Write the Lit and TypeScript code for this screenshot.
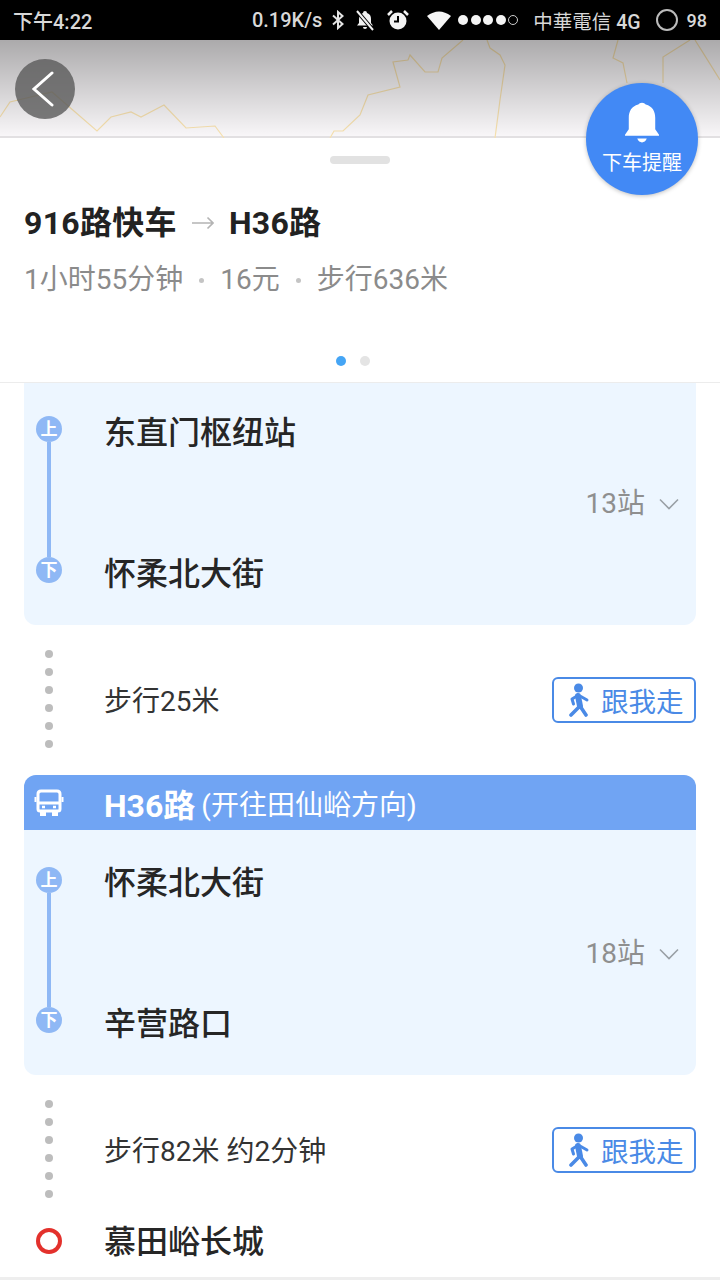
import { LitElement, html, css, svg } from 'lit';
import { customElement } from 'lit/decorators.js';

type Leg = {
  line?: string;
  direction?: string;
  from: string;
  to: string;
  stops: string;
  walk: string;
};

const legs: Leg[] = [
  { from: '东直门枢纽站', to: '怀柔北大街', stops: '13站', walk: '步行25米' },
  {
    line: 'H36路',
    direction: '(开往田仙峪方向)',
    from: '怀柔北大街',
    to: '辛营路口',
    stops: '18站',
    walk: '步行82米 约2分钟',
  },
];

const mapLines = [
  '0,117 10,102 52,92 97,131 111,117 131,112 141,117 164,105 186,128 215,126 224,138',
  '330,138 334,131 343,131 360,115 368,95 400,87 393,62 408,60 410,55 425,72 438,72 442,58 463,40',
  '487,40 490,48 500,55 505,65 500,100 495,138',
  '618,40 613,58 623,63 627,83',
  '663,83 663,57 690,40',
  '695,40 720,80',
];

@customElement('app-root')
export class AppRoot extends LitElement {
  renderStatus() {
    return html`
      <div class="status">
        <span class="time">下午4:22</span>
        <span class="status-right">
          <span>0.19K/s</span>
          <svg class="bt" width="14" height="20" viewBox="0 0 14 20" fill="none" stroke="#e4e4e4" stroke-width="2">
            <path d="M2 5.500 11.500 14 7 18V2l4.500 4L2 14.500" />
          </svg>
          <svg class="mute" width="22" height="22" viewBox="0 0 22 22" fill="#f2f2f2">
            <path d="M11 2a2 2 0 0 1 2 2c3 1 4 3 4 6v4l2 2.500H3L5 14v-4c0-3 1-5 4-6a2 2 0 0 1 2-2Z" />
            <path d="M9 18h4a2 2 0 0 1-4 0Z" />
            <path d="M3 2 19 21" stroke="#000" stroke-width="4" />
            <path d="M3 2 19 21" stroke="#f2f2f2" stroke-width="2" />
          </svg>
          <svg width="24" height="24" viewBox="0 0 24 24" fill="none">
            <circle cx="12" cy="13" r="8.500" fill="#f2f2f2" />
            <path d="M12 8v5.500H8" stroke="#000" stroke-width="2" />
            <path d="M2 7l4-4M22 7l-4-4" stroke="#f2f2f2" stroke-width="2.500" />
          </svg>
          <span class="signal">
            <svg width="26" height="20" viewBox="0 0 26 20" fill="#f6f6f6">
              <path d="M1 6Q13-3 25 6L13 20Z" />
            </svg>
            ${[1, 2, 3, 4].map(() => html`<i class="bar"></i>`)}
            <i class="bar empty"></i>
          </span>
          <span class="carrier">中華電信 <b>4G</b></span>
          <i class="battery"></i>
          <span class="level">98</span>
        </span>
      </div>
    `;
  }

  renderMap() {
    return html`
      <div class="map">
        <svg class="map-lines" width="720" height="98" viewBox="0 40 720 98" fill="none">
          ${mapLines.map(
            points => svg`<polyline points=${points} stroke="#f6e0ae" stroke-width="1.200" />`,
          )}
        </svg>
        <div class="map-shade"></div>
        <button class="back" aria-label="返回">
          <svg width="26" height="36" viewBox="0 0 26 36" fill="none" stroke="#fff" stroke-width="3" stroke-linecap="round">
            <path d="M20 2 2 18l18 16" />
          </svg>
        </button>
      </div>
    `;
  }

  renderSummary() {
    return html`
      <div class="summary">
        <div class="handle"></div>
        <div class="route">
          <span>916路快车</span>
          <svg width="22" height="14" viewBox="0 0 22 14" fill="none" stroke="#b4b4b4" stroke-width="1.600">
            <path d="M0 7h21M15.500 1.500 21 7l-5.500 5.500" />
          </svg>
          <span>H36路</span>
        </div>
        <div class="meta">
          <span>1小时55分钟</span><i></i><span>16元</span><i></i><span>步行636米</span>
        </div>
        <div class="pager"><i class="on"></i><i></i></div>
      </div>
      <button class="remind">
        <svg width="34" height="43" viewBox="0 0 36 44" fill="#fff">
          <path d="M18 0c2 0 3 1 4 2 7 2 10 7 10 14v12l4 6v1H0v-1l4-6V16C4 9 7 4 14 2c1-1 2-2 4-2Z" />
          <path d="M13 38h10c-1 3-3 4-5 4s-4-1-5-4Z" />
        </svg>
        <span>下车提醒</span>
      </button>
    `;
  }

  renderLeg(leg: Leg, index: number) {
    return html`
      <section class="card ${index === 0 ? 'first' : ''}">
        ${leg.line
          ? html`
              <header class="card-head">
                <span class="head-icon">
                  <svg width="30" height="30" viewBox="0 0 30 30" fill="none" stroke="#fff" stroke-width="3">
                    <path d="M4 21V6q0-3 3-3h16q3 0 3 3v15q0 2-2 2H6q-2 0-2-2Z" />
                    <path d="M4 15h22" />
                    <path d="M7 23v4h4v-4M19 23v4h4v-4" fill="#fff" stroke-width="2" />
                    <path d="M1.500 9v5M28.500 9v5" stroke-width="2" />
                    <path d="M8 19h3M19 19h3" stroke-width="2.500" />
                  </svg>
                </span>
                <b>${leg.line}</b>
                <span class="direction">${leg.direction}</span>
              </header>
            `
          : ''}
        <div class="card-body">
          <div class="rail">
            <i class="stop">上</i>
            <i class="rail-line"></i>
            <i class="stop">下</i>
          </div>
          <div class="stations">
            <div class="station">${leg.from}</div>
            <div class="stops">
              <span>${leg.stops}</span>
              <svg width="20" height="12" viewBox="0 0 20 12" fill="none" stroke="#9aa0a6" stroke-width="1.600">
                <path d="M1 1.500 10 10.500 19 1.500" />
              </svg>
            </div>
            <div class="station">${leg.to}</div>
          </div>
        </div>
      </section>
      ${this.renderWalk(leg.walk)}
    `;
  }

  renderWalk(label: string) {
    return html`
      <div class="walk">
        <div class="dots">${[0, 1, 2, 3, 4, 5].map(() => html`<i></i>`)}</div>
        <span class="walk-label">${label}</span>
        <button class="follow">
          <svg width="22" height="34" viewBox="0 0 22 34" fill="none" stroke="#4a8ae6" stroke-width="3.600" stroke-linecap="round" stroke-linejoin="round">
            <circle cx="10.500" cy="5" r="4.500" fill="#4a8ae6" stroke="none" />
            <path d="M10 13 12 23" stroke-width="6" />
            <path d="M9 13 4 16l1.500 5M12 13l7 4" stroke-width="3" />
            <path d="M12 23 3 32M12 23l6 9" />
          </svg>
          <span>跟我走</span>
        </button>
      </div>
    `;
  }

  render() {
    return html`
      ${this.renderStatus()} ${this.renderMap()} ${this.renderSummary()}
      <div class="legs">
        ${legs.map((leg, i) => this.renderLeg(leg, i))}
        <div class="dest">
          <i class="ring"></i>
          <span>慕田峪长城</span>
        </div>
      </div>
    `;
  }

  static styles = css`
    :host {
      display: block;
      position: relative;
      width: 720px;
      height: 1280px;
      overflow: hidden;
      background: #fff;
      font-family: Roboto, 'Noto Sans CJK SC', sans-serif;
      color: #262626;
    }
    i {
      display: block;
      font-style: normal;
    }
    button {
      font: inherit;
      padding: 0;
      border: 0;
    }
    .status {
      height: 40px;
      background: #000;
      color: #d8d8d8;
      display: flex;
      align-items: center;
      justify-content: space-between;
      padding: 0 13px 0 13px;
      font-size: 20px;
      font-weight: 500;
    }
    .status-right {
      display: flex;
      align-items: center;
      gap: 7px;
    }
    .bt {
      margin-left: 2px;
    }
    .mute {
      margin: 0 3px 0 2px;
    }
    .signal {
      display: flex;
      align-items: center;
      gap: 2.500px;
      margin: 0 8px 0 9px;
    }
    .signal svg {
      margin-right: 3.500px;
    }
    .bar {
      width: 10px;
      height: 10px;
      border-radius: 50%;
      background: #f4f4f4;
    }
    .bar.empty {
      background: none;
      border: 1px solid #ccc;
      box-sizing: border-box;
    }
    .carrier {
      font-weight: 400;
      font-size: 19.500px;
    }
    .carrier b {
      font-weight: 500;
    }
    .battery {
      width: 22px;
      height: 22px;
      box-sizing: border-box;
      border: 2px solid #bbb;
      border-radius: 50%;
      margin: 0 2px 0 8px;
    }
    .level {
      font-size: 18px;
    }
    .map {
      position: relative;
      height: 98px;
      box-sizing: border-box;
      border-bottom: 2px solid #e2e0e2;
      background: #f8f6f8;
    }
    .map-lines,
    .map-shade {
      position: absolute;
      left: 0;
      top: 0;
    }
    .map-shade {
      width: 100%;
      height: 100%;
      background: linear-gradient(rgba(0, 0, 0, 0.31), rgba(0, 0, 0, 0));
    }
    .back {
      position: absolute;
      left: 15px;
      top: 19px;
      width: 60px;
      height: 60px;
      border-radius: 50%;
      background: rgba(90, 90, 90, 0.8);
      display: flex;
      align-items: center;
      justify-content: center;
    }
    .summary {
      height: 245px;
      box-sizing: border-box;
      border-bottom: 1px solid #ececec;
      display: flex;
      flex-direction: column;
      padding: 18px 24px 0;
    }
    .handle {
      align-self: center;
      width: 60px;
      height: 8px;
      border-radius: 4px;
      background: #e2e2e2;
    }
    .route {
      display: flex;
      align-items: center;
      gap: 15px;
      margin-top: 37px;
      font-size: 32px;
      letter-spacing: 0.3px;
      line-height: 44px;
      font-weight: 700;
      color: #222;
    }
    .meta {
      display: flex;
      align-items: center;
      gap: 16px;
      margin-top: 16px;
      font-size: 28px;
      line-height: 38px;
      color: #8b8b8b;
    }
    .meta i {
      width: 5px;
      height: 5px;
      border-radius: 50%;
      background: #c4c4c4;
    }
    .pager {
      display: flex;
      justify-content: center;
      gap: 14px;
      margin-top: 57px;
      padding-right: 14px;
    }
    .pager i {
      width: 10px;
      height: 10px;
      border-radius: 50%;
      background: #e4e4e4;
    }
    .pager i.on {
      background: #45a5f5;
    }
    .remind {
      position: absolute;
      left: 586px;
      top: 83px;
      width: 112px;
      height: 112px;
      border-radius: 50%;
      background: #4289f5;
      box-shadow: 0 1px 4px rgba(0, 0, 0, 0.25);
      color: #fff;
      display: flex;
      flex-direction: column;
      align-items: center;
      justify-content: flex-start;
      padding-top: 19px;
      box-sizing: border-box;
    }
    .remind span {
      font-size: 20px;
      line-height: 26px;
      margin-top: 5px;
    }
    .legs {
      display: flex;
      flex-direction: column;
    }
    .card {
      margin: 0 24px;
      border-radius: 12px;
      overflow: hidden;
      background: #edf6ff;
    }
    .card.first {
      border-radius: 0 0 12px 12px;
    }
    .card-head {
      height: 55px;
      background: #70a4f3;
      color: #fff;
      display: flex;
      align-items: center;
    }
    .head-icon {
      width: 50px;
      display: flex;
      justify-content: center;
    }
    .card-head b {
      margin-left: 30px;
      font-size: 32px;
      font-weight: 700;
    }
    .direction {
      margin-left: 6px;
      font-size: 28px;
    }
    .card-body {
      height: 245px;
      box-sizing: border-box;
      display: flex;
      padding: 37px 0 42px;
    }
    .card.first .card-body {
      height: 242px;
      padding-top: 33px;
    }
    .card.first .station:first-child {
      margin-top: 1px;
    }
    .rail {
      width: 50px;
      display: flex;
      flex-direction: column;
      align-items: center;
    }
    .stop {
      width: 26px;
      height: 26px;
      border-radius: 50%;
      background: #8fb8f5;
      color: #fff;
      font-size: 17px;
      font-weight: 700;
      line-height: 26px;
      text-align: center;
    }
    .rail-line {
      flex: 1;
      width: 4px;
      background: #8fb8f5;
    }
    .stations {
      flex: 1;
      margin-left: 30px;
      display: flex;
      flex-direction: column;
      justify-content: space-between;
    }
    .station {
      font-size: 32px;
      line-height: 32px;
      font-weight: 500;
      color: #262626;
    }
    .stations .station:last-child {
      margin-bottom: -7px;
    }
    .stops {
      display: flex;
      align-items: center;
      justify-content: flex-end;
      gap: 14px;
      padding-right: 17px;
      font-size: 28px;
      line-height: 36px;
      color: #8f8f8f;
    }
    .walk {
      height: 150px;
      display: flex;
      align-items: center;
      padding: 0 24px;
    }
    .dots {
      width: 50px;
      display: flex;
      flex-direction: column;
      align-items: center;
      gap: 10px;
      margin-top: -2px;
    }
    .dots i {
      width: 8px;
      height: 8px;
      border-radius: 50%;
      background: #bdbdbd;
    }
    .walk-label {
      flex: 1;
      margin-left: 30px;
      font-size: 28px;
      color: #333;
      margin-bottom: 2px;
    }
    .follow {
      width: 144px;
      height: 46px;
      box-sizing: border-box;
      border: 2px solid #4a8ae6;
      border-radius: 6px;
      background: #fff;
      color: #4a8ae6;
      display: flex;
      align-items: center;
      font-size: 27.500px;
    }
    .follow svg {
      margin: 0 11px 0 14px;
    }
    .dest {
      height: 52px;
      display: flex;
      align-items: center;
      box-sizing: content-box;
      padding: 0 24px;
      border-bottom: 3px solid #eeeeee;
      font-size: 32px;
      font-weight: 500;
    }
    .dest span {
      margin-bottom: 24px;
    }
    .ring {
      width: 26px;
      height: 26px;
      box-sizing: border-box;
      border: 4px solid #e3312c;
      border-radius: 50%;
      margin: 0 42px 20px 12px;
    }
  `;
}
